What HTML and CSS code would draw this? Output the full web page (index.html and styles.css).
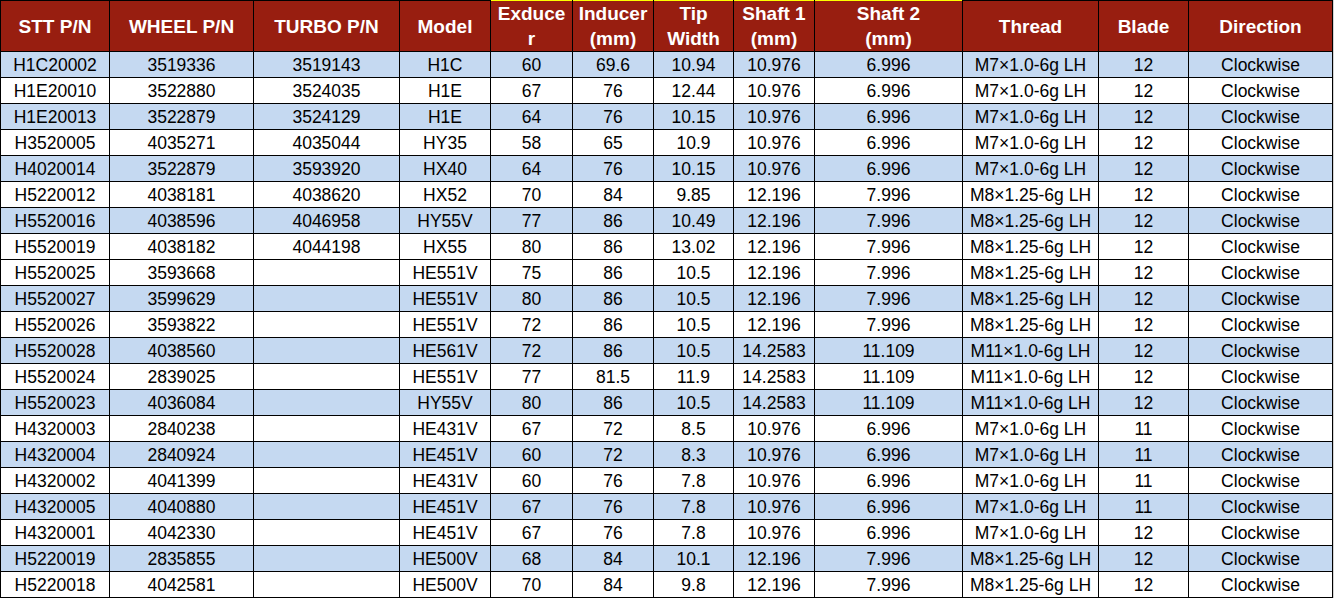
FILE: index.html
```html
<!DOCTYPE html>
<html>
<head>
<meta charset="utf-8">
<title>Turbo wheel table</title>
<link rel="stylesheet" href="styles.css">
</head>
<body>
<div class="sheet">
<table class="spec">
<colgroup>
<col class="c1"><col class="c2"><col class="c3"><col class="c4"><col class="c5"><col class="c6"><col class="c7"><col class="c8"><col class="c9"><col class="c10"><col class="c11"><col class="c12">
</colgroup>
<thead>
<tr>
<th>STT P/N</th><th>WHEEL P/N</th><th>TURBO P/N</th><th>Model</th>
<th class="hl">Exduce<br>r</th><th class="hl">Inducer<br>(mm)</th><th class="hl">Tip<br>Width</th><th class="hl">Shaft 1<br>(mm)</th><th class="hl">Shaft 2<br>(mm)</th>
<th>Thread</th><th>Blade</th><th>Direction</th>
</tr>
</thead>
<tbody>
<tr class="alt"><td>H1C20002</td><td>3519336</td><td>3519143</td><td>H1C</td><td>60</td><td>69.6</td><td>10.94</td><td>10.976</td><td>6.996</td><td>M7×1.0-6g LH</td><td>12</td><td>Clockwise</td></tr>
<tr><td>H1E20010</td><td>3522880</td><td>3524035</td><td>H1E</td><td>67</td><td>76</td><td>12.44</td><td>10.976</td><td>6.996</td><td>M7×1.0-6g LH</td><td>12</td><td>Clockwise</td></tr>
<tr class="alt"><td>H1E20013</td><td>3522879</td><td>3524129</td><td>H1E</td><td>64</td><td>76</td><td>10.15</td><td>10.976</td><td>6.996</td><td>M7×1.0-6g LH</td><td>12</td><td>Clockwise</td></tr>
<tr><td>H3520005</td><td>4035271</td><td>4035044</td><td>HY35</td><td>58</td><td>65</td><td>10.9</td><td>10.976</td><td>6.996</td><td>M7×1.0-6g LH</td><td>12</td><td>Clockwise</td></tr>
<tr class="alt"><td>H4020014</td><td>3522879</td><td>3593920</td><td>HX40</td><td>64</td><td>76</td><td>10.15</td><td>10.976</td><td>6.996</td><td>M7×1.0-6g LH</td><td>12</td><td>Clockwise</td></tr>
<tr><td>H5220012</td><td>4038181</td><td>4038620</td><td>HX52</td><td>70</td><td>84</td><td>9.85</td><td>12.196</td><td>7.996</td><td>M8×1.25-6g LH</td><td>12</td><td>Clockwise</td></tr>
<tr class="alt"><td>H5520016</td><td>4038596</td><td>4046958</td><td>HY55V</td><td>77</td><td>86</td><td>10.49</td><td>12.196</td><td>7.996</td><td>M8×1.25-6g LH</td><td>12</td><td>Clockwise</td></tr>
<tr><td>H5520019</td><td>4038182</td><td>4044198</td><td>HX55</td><td>80</td><td>86</td><td>13.02</td><td>12.196</td><td>7.996</td><td>M8×1.25-6g LH</td><td>12</td><td>Clockwise</td></tr>
<tr><td>H5520025</td><td>3593668</td><td></td><td>HE551V</td><td>75</td><td>86</td><td>10.5</td><td>12.196</td><td>7.996</td><td>M8×1.25-6g LH</td><td>12</td><td>Clockwise</td></tr>
<tr class="alt"><td>H5520027</td><td>3599629</td><td></td><td>HE551V</td><td>80</td><td>86</td><td>10.5</td><td>12.196</td><td>7.996</td><td>M8×1.25-6g LH</td><td>12</td><td>Clockwise</td></tr>
<tr><td>H5520026</td><td>3593822</td><td></td><td>HE551V</td><td>72</td><td>86</td><td>10.5</td><td>12.196</td><td>7.996</td><td>M8×1.25-6g LH</td><td>12</td><td>Clockwise</td></tr>
<tr class="alt"><td>H5520028</td><td>4038560</td><td></td><td>HE561V</td><td>72</td><td>86</td><td>10.5</td><td>14.2583</td><td>11.109</td><td>M11×1.0-6g LH</td><td>12</td><td>Clockwise</td></tr>
<tr><td>H5520024</td><td>2839025</td><td></td><td>HE551V</td><td>77</td><td>81.5</td><td>11.9</td><td>14.2583</td><td>11.109</td><td>M11×1.0-6g LH</td><td>12</td><td>Clockwise</td></tr>
<tr class="alt"><td>H5520023</td><td>4036084</td><td></td><td>HY55V</td><td>80</td><td>86</td><td>10.5</td><td>14.2583</td><td>11.109</td><td>M11×1.0-6g LH</td><td>12</td><td>Clockwise</td></tr>
<tr><td>H4320003</td><td>2840238</td><td></td><td>HE431V</td><td>67</td><td>72</td><td>8.5</td><td>10.976</td><td>6.996</td><td>M7×1.0-6g LH</td><td>11</td><td>Clockwise</td></tr>
<tr class="alt"><td>H4320004</td><td>2840924</td><td></td><td>HE451V</td><td>60</td><td>72</td><td>8.3</td><td>10.976</td><td>6.996</td><td>M7×1.0-6g LH</td><td>11</td><td>Clockwise</td></tr>
<tr><td>H4320002</td><td>4041399</td><td></td><td>HE431V</td><td>60</td><td>76</td><td>7.8</td><td>10.976</td><td>6.996</td><td>M7×1.0-6g LH</td><td>11</td><td>Clockwise</td></tr>
<tr class="alt"><td>H4320005</td><td>4040880</td><td></td><td>HE451V</td><td>67</td><td>76</td><td>7.8</td><td>10.976</td><td>6.996</td><td>M7×1.0-6g LH</td><td>11</td><td>Clockwise</td></tr>
<tr><td>H4320001</td><td>4042330</td><td></td><td>HE451V</td><td>67</td><td>76</td><td>7.8</td><td>10.976</td><td>6.996</td><td>M7×1.0-6g LH</td><td>12</td><td>Clockwise</td></tr>
<tr class="alt"><td>H5220019</td><td>2835855</td><td></td><td>HE500V</td><td>68</td><td>84</td><td>10.1</td><td>12.196</td><td>7.996</td><td>M8×1.25-6g LH</td><td>12</td><td>Clockwise</td></tr>
<tr><td>H5220018</td><td>4042581</td><td></td><td>HE500V</td><td>70</td><td>84</td><td>9.8</td><td>12.196</td><td>7.996</td><td>M8×1.25-6g LH</td><td>12</td><td>Clockwise</td></tr>
</tbody>
</table>
</div>
</body>
</html>
```

FILE: styles.css
```css
html, body {
  margin: 0;
  padding: 0;
  background: #ffffff;
}

.sheet {
  width: 1333px;
  border-right: 1px solid #d4d4d4;
}

.spec {
  border-collapse: collapse;
  table-layout: fixed;
  width: 1333px;
  font-family: "Liberation Sans", Arial, sans-serif;
  color: #000;
}

.c1 { width: 109px; }
.c2 { width: 144px; }
.c3 { width: 146px; }
.c4 { width: 91px; }
.c5 { width: 82px; }
.c6 { width: 81px; }
.c7 { width: 80px; }
.c8 { width: 81px; }
.c9 { width: 148px; }
.c10 { width: 136px; }
.c11 { width: 90px; }
.c12 { width: 144px; }

.spec th,
.spec td {
  border: 1px solid #000;
  padding: 0;
  text-align: center;
  vertical-align: middle;
  white-space: nowrap;
  overflow: hidden;
}

.spec thead tr {
  height: 51px;
}

.spec th {
  background: #981e10;
  color: #fff;
  font-weight: bold;
  font-size: 19px;
  line-height: 25px;
}

.spec th.hl {
  border-top-color: #ffff00;
}

.spec tbody tr {
  height: 26px;
}

.spec td {
  font-size: 17.5px;
  line-height: 20px;
  background: #fff;
}

.spec tr.alt td {
  background: #c5d9f1;
}
```
